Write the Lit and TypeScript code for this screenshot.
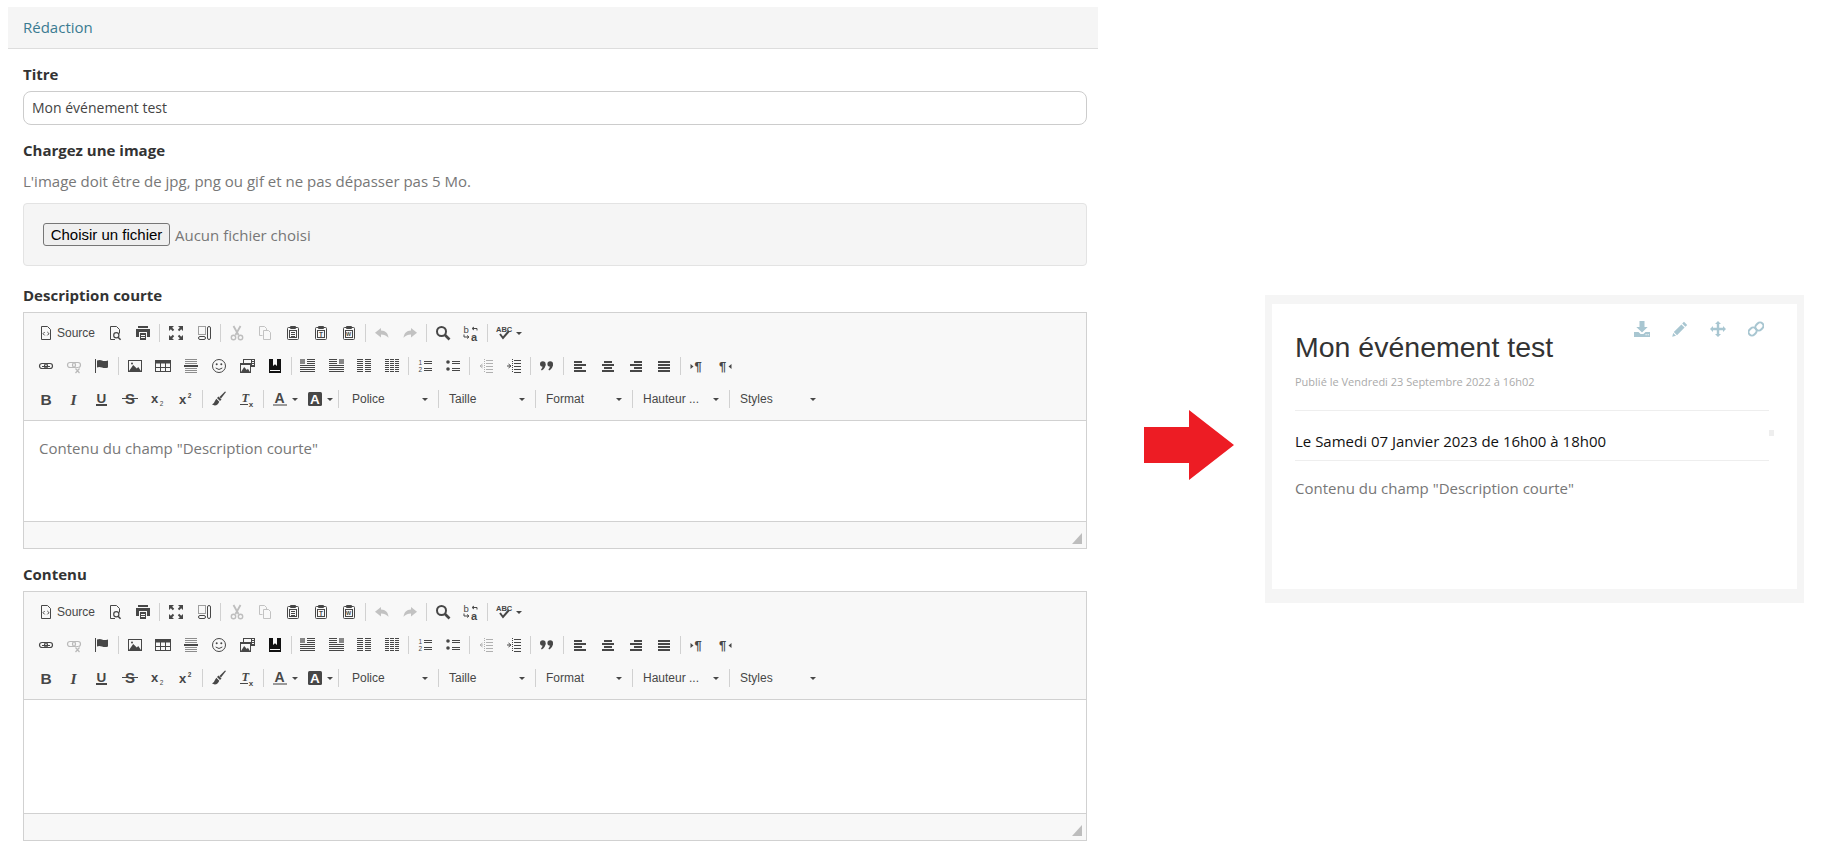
import { LitElement, html, css, svg } from "lit";
import { customElement } from "lit/decorators.js";

const DARK = "#474747";
const SANS = "Liberation Sans, Arial, sans-serif";

const hl = (x: number, w: number, ys: number[], h = 1, fill = DARK) =>
  ys.map((y) => svg`<rect x=${x} y=${y} width=${w} height=${h} fill=${fill}></rect>`);

const txt = (s: string, x: number, y: number, size: number, opts: { w?: string; st?: string; fam?: string; fill?: string } = {}) =>
  svg`<text x=${x} y=${y} font-size=${size} font-weight=${opts.w || "bold"} font-style=${opts.st || "normal"} font-family=${opts.fam || SANS} fill=${opts.fill || DARK}>${s}</text>`;

const clip = (inner: unknown) => svg`
  <path d="M5 2.5H3.5q-1 0-1 1v10q0 1 1 1h9q1 0 1-1v-10q0-1-1-1H11" fill="none" stroke=${DARK}></path>
  <rect x="5" y="1" width="6" height="3" rx="1" fill=${DARK}></rect>
  <rect x="4.5" y="5.5" width="7" height="7" fill="#f8f8f8" stroke=${DARK}></rect>
  ${inner}`;

const mountain = (x: number, y: number, w: number, h: number) =>
  svg`<path d="M${x} ${y + h}l${w * 0.35} ${-h}l${w * 0.3} ${h * 0.6}l${w * 0.12} ${-h * 0.25}l${w * 0.23} ${h * 0.65}z" fill=${DARK}></path>`;

const corner = svg`<path d="M1 1h5L4.2 2.8l2 2-1.4 1.4-2-2L1 6z" fill=${DARK}></path>`;

const ICONS: Record<string, unknown> = {
  source: svg`<path d="M3.5 1.5h6l3 3v10h-9z" fill="none" stroke=${DARK}></path><path d="M6.7 7L5 8.7l1.7 1.7M9.3 7L11 8.7l-1.7 1.7" fill="none" stroke=${DARK}></path>`,
  preview: svg`<path d="M8 14.5H3.5v-13h6l3 3v4" fill="none" stroke=${DARK}></path><circle cx="9.3" cy="10.3" r="2.6" fill="none" stroke=${DARK} stroke-width="1.2"></circle><path d="M11 12.2l2.6 2.6" stroke=${DARK} stroke-width="1.6"></path>`,
  print: svg`<rect x="3" y="1" width="10" height="2" fill=${DARK}></rect><rect x="1" y="4" width="14" height="8" fill=${DARK}></rect><rect x="4" y="7" width="8" height="8" fill="#f8f8f8"></rect><rect x="5" y="8" width="6" height="7" fill=${DARK}></rect>${hl(6, 4, [10, 12], 1, "#f8f8f8")}`,
  max: svg`${corner}<g transform="rotate(90 8 8)">${corner}</g><g transform="rotate(180 8 8)">${corner}</g><g transform="rotate(270 8 8)">${corner}</g>`,
  blocks: svg`<rect x="2.5" y="1.5" width="7" height="8" fill="none" stroke=${DARK} stroke-dasharray="1 1"></rect><rect x="2.5" y="11.5" width="7" height="3" rx="1.5" fill="none" stroke=${DARK}></rect><rect x="11.5" y="1.5" width="3" height="13" rx="1.5" fill="none" stroke=${DARK}></rect>`,
  cut: svg`<g opacity=".32"><path d="M4.5 1l5 9M11.5 1l-5 9" stroke=${DARK} stroke-width="1.8" fill="none"></path><circle cx="4.5" cy="12.5" r="2.2" fill="none" stroke=${DARK} stroke-width="1.4"></circle><circle cx="11.5" cy="12.5" r="2.2" fill="none" stroke=${DARK} stroke-width="1.4"></circle></g>`,
  copy: svg`<g opacity=".3" fill="none" stroke=${DARK}><path d="M5.5 10.5h-3v-9h5l2 2v2"></path><path d="M6.5 5.5h5l2 2v7h-7z"></path></g>`,
  paste: clip(hl(6, 4, [7, 9, 11])),
  pastetext: clip(txt("T", 6, 11.8, 6.5)),
  pasteword: clip(txt("W", 5, 11.2, 5.4)),
  undo: svg`<path d="M7 3L1 7.8l6 4.7V9.6c3 0 5 .8 7.5 3.2C14 8.5 11.5 5.8 7 5.6z" fill=${DARK} opacity=".3"></path>`,
  redo: svg`<path d="M9 3l6 4.8-6 4.7V9.6c-3 0-5 .8-7.5 3.2C2 8.5 4.5 5.8 9 5.6z" fill=${DARK} opacity=".3"></path>`,
  find: svg`<circle cx="6.5" cy="6.5" r="4.5" fill="none" stroke=${DARK} stroke-width="2"></circle><path d="M10 10l4.5 4.5" stroke=${DARK} stroke-width="2.6"></path>`,
  replace: svg`${txt("b", 0.5, 7.5, 9.5, { w: "normal" })}${txt("a", 8, 15.5, 11, { w: "bold" })}<path d="M14 5.5V3.5H9.5M11 2L9 3.5 11 5M1 9.5v2.5h4.5M4 10.5l2 1.5-2 1.5" fill="none" stroke=${DARK}></path>`,
  spell: svg`${txt("ABC", 0, 6.8, 7.5)}<path d="M4 9l3 4 6-7" fill="none" stroke=${DARK} stroke-width="2"></path>`,
  link: svg`<rect x="1.5" y="5.5" width="8" height="5" rx="2.5" fill="none" stroke=${DARK} stroke-width="1.2"></rect><rect x="6.5" y="5.5" width="8" height="5" rx="2.5" fill="none" stroke=${DARK} stroke-width="1.2"></rect>${hl(4, 8, [8], 1)}`,
  unlink: svg`<g opacity=".35"><rect x="1.5" y="4.5" width="8" height="5" rx="2.5" fill="none" stroke=${DARK} stroke-width="1.2"></rect><rect x="6.5" y="4.5" width="8" height="5" rx="2.5" fill="none" stroke=${DARK} stroke-width="1.2"></rect><path d="M9 10.5l4.5 4.5M13.5 10.5L9 15" stroke="#f8f8f8" stroke-width="3"></path><path d="M9.5 10.5l4 4.5M13.5 10.5l-4 4.5" stroke=${DARK} stroke-width="1.2"></path></g>`,
  anchor: svg`<rect x="1" y="1" width="1" height="14" fill=${DARK}></rect><path d="M3 2.5q3-1.2 5 0t6 0v7q-3 1.2-6 0t-5 0z" fill=${DARK}></path>`,
  image: svg`<rect x="1.5" y="2.5" width="13" height="11" fill="none" stroke=${DARK}></rect>${mountain(2, 7, 12, 6)}<circle cx="5" cy="5.5" r="1" fill=${DARK}></circle>`,
  table: svg`<rect x="0.5" y="2.5" width="15" height="11" fill="none" stroke=${DARK}></rect><rect x="0.5" y="2.5" width="15" height="3" fill=${DARK}></rect><path d="M5.5 5v8.5M10.5 5v8.5M1 9.5h14" stroke=${DARK}></path>`,
  hr: svg`${hl(2, 12, [1, 3, 5], 1, "#8d8d8d")}${hl(1, 14, [7], 2)}${hl(2, 12, [10, 12, 14], 1, "#8d8d8d")}`,
  smiley: svg`<circle cx="8" cy="8" r="6.5" fill="none" stroke=${DARK}></circle><circle cx="5.7" cy="6.3" r="1" fill=${DARK}></circle><circle cx="10.3" cy="6.3" r="1" fill=${DARK}></circle><path d="M4.7 10q3.3 3 6.6 0" fill="none" stroke=${DARK}></path>`,
  iframe: svg`<rect x="4.5" y="1.5" width="11" height="7" fill="#f8f8f8" stroke=${DARK}></rect><rect x="12" y="1" width="4" height="8" fill=${DARK}></rect>${hl(13, 2, [2, 4, 6], 1, "#f8f8f8")}<rect x="1.5" y="5.5" width="10" height="9" fill="#f8f8f8" stroke=${DARK}></rect><rect x="1" y="5" width="11" height="2" fill=${DARK}></rect>${mountain(2, 9, 9, 5)}`,
  book: svg`<path d="M2 1h12v14H2z" fill="#111"></path><path d="M6 1h4v7L8 6.3 6 8z" fill="#f8f8f8"></path><rect x="3" y="12" width="10" height="1" fill="#f8f8f8"></rect>`,
  colleft: svg`<rect x="0" y="1" width="5" height="5" fill="#888"></rect>${hl(7, 8, [1, 3, 5])}${hl(0, 15, [7, 9, 11, 13])}`,
  colright: svg`<rect x="11" y="1" width="5" height="5" fill="#888"></rect>${hl(1, 8, [1, 3, 5])}${hl(1, 15, [7, 9, 11, 13])}`,
  col2: svg`${hl(1, 6, [1, 3, 5, 7, 9, 11, 13])}${hl(9, 6, [1, 3, 5, 7, 9, 11, 13])}`,
  col3: svg`${hl(1, 4, [1, 3, 5, 7, 9, 11, 13])}${hl(6, 4, [1, 3, 5, 7, 9, 11, 13])}${hl(11, 4, [1, 3, 5, 7, 9, 11, 13])}`,
  numlist: svg`${txt("1", 1.5, 7, 6.5, { w: "normal" })}${txt("2", 1.5, 14, 6.5, { w: "normal" })}${hl(7, 8, [3, 5, 10, 12])}`,
  bullist: svg`<circle cx="3" cy="4" r="1.8" fill=${DARK}></circle><circle cx="3" cy="11" r="1.8" fill=${DARK}></circle>${hl(7, 8, [3, 5, 10, 12])}`,
  outdent: svg`<g opacity=".4"><path d="M6.5 1v14" stroke=${DARK} stroke-dasharray="1 1"></path><path d="M4.5 6L2 8l2.5 2M2 8h3" fill="none" stroke=${DARK}></path>${hl(8, 7, [2, 5, 8, 11, 14])}</g>`,
  indent: svg`<path d="M6.5 1v14" stroke=${DARK} stroke-dasharray="1 1"></path><path d="M2.5 6L5 8l-2.5 2M1 8h3.5" fill="none" stroke=${DARK}></path>${hl(8, 7, [2, 5, 8, 11, 14])}`,
  quote: svg`<circle cx="3.8" cy="6" r="2.8" fill=${DARK}></circle><path d="M6.6 6q0 4-3.8 6.5L2 11.5q1.5-1.5 1.5-3z" fill=${DARK}></path><circle cx="11.2" cy="6" r="2.8" fill=${DARK}></circle><path d="M14 6q0 4-3.8 6.5L9.4 11.5q1.5-1.5 1.5-3z" fill=${DARK}></path>`,
  aleft: svg`${hl(2, 8, [3, 9], 2)}${hl(2, 12, [6, 12], 2)}`,
  acenter: svg`${hl(4, 8, [3, 9], 2)}${hl(2, 12, [6, 12], 2)}`,
  aright: svg`${hl(6, 8, [3, 9], 2)}${hl(2, 12, [6, 12], 2)}`,
  ajust: svg`${hl(2, 12, [3, 6, 9, 12], 2)}`,
  ltr: svg`<path d="M1.5 6l3 2.5-3 2.5z" fill=${DARK}></path>${txt("¶", 5.5, 13, 13)}`,
  rtl: svg`<path d="M14.5 6l-3 2.5 3 2.5z" fill=${DARK}></path>${txt("¶", 2, 13, 13)}`,
  bold: txt("B", 2.5, 13.5, 15.5),
  italic: txt("I", 4.5, 13.5, 15.5, { st: "italic", fam: "Liberation Serif, serif" }),
  underline: svg`${txt("U", 2.5, 11.5, 13.5)}<rect x="2" y="13" width="11" height="2" fill=${DARK}></rect>`,
  strike: svg`${txt("S", 3, 13, 15)}<rect x="0" y="7" width="16" height="1" fill=${DARK}></rect>`,
  sub: svg`${txt("x", 1, 11.5, 13)}${txt("2", 9.8, 14.5, 6.5, { w: "normal" })}`,
  sup: svg`${txt("x", 1, 13, 13)}${txt("2", 9.8, 7, 6.5)}`,
  brush: svg`<path d="M15 1l-1-.5L8.5 6 10 7.5z" fill=${DARK}></path><path d="M7.5 5.5l3 3-1.5 1.5-3-3z" fill=${DARK}></path><path d="M5.3 7.7l3 3q-1.5 3.5-4.5 3.8l-2.8-1q2.5-1.5 2.8-3.2z" fill=${DARK}></path>`,
  clear: svg`${txt("T", 2.5, 11, 12.5, { st: "italic", fam: "Liberation Serif, serif" })}<rect x="1" y="13" width="8" height="1" fill=${DARK}></rect>${txt("x", 9.8, 15.5, 8)}`,
  color: svg`${txt("A", 2.5, 12, 14)}<rect x="1" y="13" width="14" height="2" fill="#9a9a9a"></rect>`,
  bgcolor: svg`<rect x="1" y="1" width="14" height="14" rx="1.5" fill=${DARK}></rect>${txt("A", 3, 12.8, 13.5, { fill: "#fff" })}`,
};

const CARD_ICONS = {
  download: svg`<path d="M5.5 0h5v6h3.2L8 11.5 2.3 6h3.2z"></path><path d="M0 11h4.5L6.6 13h2.8L11.5 11H16v5H0zM11.5 13.2v1h1.2v-1zM13.6 13.2v1h1.2v-1z" fill-rule="evenodd"></path>`,
  pencil: svg`<path d="M12 .8l3.2 3.2-1.8 1.8-3.2-3.2zM9.4 3.4l3.2 3.2-7.6 7.6-3.2-3.2zM1.2 12l2.8 2.8-3.8 1z"></path>`,
  move: svg`<path d="M8 0l3 3H9.2v3.8H13V5l3 3-3 3V9.2H9.2V13H11l-3 3-3-3h1.8V9.2H3V11L0 8l3-3v1.8h3.8V3H5z"></path>`,
  link: svg`<g fill="none" stroke="currentColor" stroke-width="2"><rect x="8" y="1.2" width="6.8" height="8.6" rx="3.4" transform="rotate(45 11.4 5.5)"></rect><rect x="1.2" y="6.2" width="6.8" height="8.6" rx="3.4" transform="rotate(45 4.6 10.5)"></rect></g>`,
};

const icon = (name: string) => html`<svg class="ico" viewBox="0 0 16 16" aria-hidden="true">${ICONS[name]}</svg>`;
const arrowDown = html`<span class="caret"></span>`;

type Item = string;
const ROW1: Item[] = ["source", "preview", "print", "|", "max", "blocks", "|", "cut", "copy", "paste", "pastetext", "pasteword", "|", "undo", "redo", "|", "find", "replace", "|", "spell>"];
const ROW2: Item[] = ["link", "unlink", "anchor", "|", "image", "table", "hr", "smiley", "iframe", "book", "|", "colleft", "colright", "col2", "col3", "|", "numlist", "bullist", "|", "outdent", "indent", "|", "quote", "|", "aleft", "acenter", "aright", "ajust", "|", "ltr", "rtl"];
const ROW3: Item[] = ["bold", "italic", "underline", "strike", "sub", "sup", "|", "brush", "clear", "|", "color>", "bgcolor>", "|", "#Police", "|", "#Taille", "|", "#Format", "|", "#Hauteur ...", "|", "#Styles"];

@customElement("cke-box")
class CkeBox extends LitElement {
  static properties = { tall: { type: Boolean }, text: { type: String } };
  tall = false;
  text = "";

  static styles = css`
    :host { display: block; }
    .editor { border: 1px solid #d1d1d1; background: #fff; }
    .toolbar {
      background: #f8f8f8; border-bottom: 1px solid #d1d1d1;
      padding: 3px 0 4px 8px; display: flex; flex-direction: column;
    }
    .row { display: flex; align-items: center; height: 34px; }
    .row:nth-child(2) { height: 32px; }
    .btn { width: 28px; height: 24px; display: flex; align-items: center; justify-content: center; flex: none; }
    .btn.more { width: 35px; justify-content: flex-start; padding-left: 6px; box-sizing: border-box; }
    .btn.more .caret { margin-left: 4px; }
    .btn.src { width: 69px; justify-content: flex-start; padding-left: 6px; box-sizing: border-box; gap: 3px; }
    .ico { width: 16px; height: 16px; display: block; flex: none; overflow: visible; }
    .srclabel, .combo { font: 12px "Liberation Sans", Arial, sans-serif; color: #474747; }
    .sep { width: 1px; height: 18px; background: #d1d1d1; margin: 0 2px; flex: none; }
    .combo {
      width: 96px; height: 24px; box-sizing: border-box; padding: 0 10px; margin: 0 -2px;
      display: flex; align-items: center; justify-content: space-between; flex: none;
    }
    .combo.first { width: 99px; padding-left: 13px; }
    .caret { width: 0; height: 0; border: 3px solid transparent; border-top-color: #474747; border-bottom: 0; flex: none; }
    .area {
      height: 100px; padding: 17px 15px 0; box-sizing: border-box;
      font: 15px/20px "Open Sans", sans-serif; color: #777;
    }
    .tall .area { height: 113px; }
    .foot {
      height: 27px; box-sizing: border-box; background: #f8f8f8; border-top: 1px solid #d1d1d1;
      display: flex; justify-content: flex-end; align-items: flex-end; padding: 0 4px 4px 0;
    }
    .grip { width: 10px; height: 11px; display: block; }
  `;

  private item(it: Item, first: boolean) {
    if (it === "|") return html`<span class="sep"></span>`;
    if (it === "source")
      return html`<span class="btn src">${icon("source")}<span class="srclabel">Source</span></span>`;
    if (it.startsWith("#"))
      return html`<span class="combo ${first ? "first" : ""}"><span>${it.slice(1)}</span>${arrowDown}</span>`;
    if (it.endsWith(">")) return html`<span class="btn more">${icon(it.slice(0, -1))}${arrowDown}</span>`;
    return html`<span class="btn">${icon(it)}</span>`;
  }

  private row(items: Item[]) {
    const firstCombo = items.findIndex((i) => i.startsWith("#"));
    return html`<div class="row">${items.map((it, i) => this.item(it, i === firstCombo))}</div>`;
  }

  render() {
    return html`<div class="editor ${this.tall ? "tall" : ""}">
      <div class="toolbar">${this.row(ROW1)}${this.row(ROW2)}${this.row(ROW3)}</div>
      <div class="area">${this.text}</div>
      <div class="foot">
        <svg class="grip" viewBox="0 0 10 11"><path d="M10 0v11H0z" fill="#bdbdbd"></path></svg>
      </div>
    </div>`;
  }
}

@customElement("app-root")
export class AppRoot extends LitElement {
  static styles = css`
    :host { display: flex; align-items: flex-start; font: 15px/20px "Open Sans", sans-serif; color: #333; background: #fff; min-height: 848px; padding: 7px 0 0 8px; box-sizing: border-box; }
    .panel { width: 1090px; flex: none; }
    .head {
      height: 41px; box-sizing: content-box; background: #f5f5f5; border-bottom: 1px solid #ddd; padding-left: 15px;
      display: flex; align-items: flex-start; color: #3a7b91; line-height: 40px;
    }
    .form { padding: 15px 11px 0 15px; }
    .lbl { display: block; font-weight: 700; color: #333; line-height: 20px; }
    .titleinput {
      margin-top: 7px; height: 34px; box-sizing: border-box; border: 1px solid #ccc; border-radius: 8px;
      padding: 0 8px; display: flex; align-items: center; color: #444; font-size: 14px;
    }
    .charge { margin-top: 15px; }
    .note { margin-top: 11px; color: #777; }
    .filebox {
      margin-top: 12px; height: 63px; box-sizing: border-box; background: #f5f5f5; border: 1px solid #e3e3e3; border-radius: 4px;
      padding: 0 19px; display: flex; align-items: center; gap: 5px; color: #777;
    }
    .filebtn {
      height: 23px; width: 127px; box-sizing: border-box; padding: 0; border: 1px solid #767676; border-radius: 3px; background: #efefef;
      font: 15px "Liberation Sans", Arial, sans-serif; color: #000; text-align: center;
    }
    .desc { margin-top: 19px; margin-bottom: 7px; }
    .cont { margin-top: 15px; margin-bottom: 7px; }
    .arrow { width: 90px; height: 70px; margin: 403px 31px 0 46px; flex: none; display: block; }
    .card { width: 539px; height: 308px; flex: none; margin-top: 288px; background: #f5f5f5; padding: 9px 7px 14px; box-sizing: border-box; }
    .inner { background: #fff; height: 100%; padding: 17px 28px 0 23px; box-sizing: border-box; }
    .top { display: grid; grid-template-columns: 1fr auto; }
    h1 { margin: 9px 0 0; font: 400 28.5px/34px "Liberation Sans", Arial, sans-serif; color: #333; }
    .tools { display: flex; gap: 22px; padding-right: 5px; color: #a8c6d1; }
    .tools svg { width: 16px; height: 16px; display: block; fill: currentColor; }
    .meta { margin-top: 10px; font-size: 11px; line-height: 16px; color: #aaa; }
    .rule { height: 1px; background: #eee; }
    .r1 { margin-top: 20px; }
    .date { margin-top: 20px; display: flex; justify-content: space-between; margin-right: -5px; color: #111; }
    .square { width: 5px; height: 6px; background: #eee; margin-top: -1px; }
    .r2 { margin-top: 9px; }
    .text { margin-top: 17px; color: #777; }
  `;

  render() {
    return html`
      <section class="panel">
        <div class="head">Rédaction</div>
        <div class="form">
          <div class="lbl">Titre</div>
          <div class="titleinput">Mon événement test</div>
          <div class="lbl charge">Chargez une image</div>
          <div class="note">L'image doit être de jpg, png ou gif et ne pas dépasser pas 5 Mo.</div>
          <div class="filebox"><button class="filebtn">Choisir un fichier</button><span>Aucun fichier choisi</span></div>
          <div class="lbl desc">Description courte</div>
          <cke-box text='Contenu du champ "Description courte"'></cke-box>
          <div class="lbl cont">Contenu</div>
          <cke-box tall></cke-box>
        </div>
      </section>
      <svg class="arrow" viewBox="0 0 90 70" aria-hidden="true"><path d="M0 17h45V0l45 35-45 35V53H0z" fill="#ed1c24"></path></svg>
      <section class="card">
        <div class="inner">
          <div class="top">
            <h1>Mon événement test</h1>
            <div class="tools">
              <svg viewBox="0 0 16 16">${CARD_ICONS.download}</svg>
              <svg viewBox="0 0 16 16">${CARD_ICONS.pencil}</svg>
              <svg viewBox="0 0 16 16">${CARD_ICONS.move}</svg>
              <svg viewBox="0 0 16 16">${CARD_ICONS.link}</svg>
            </div>
          </div>
          <div class="meta">Publié le Vendredi 23 Septembre 2022 à 16h02</div>
          <div class="rule r1"></div>
          <div class="date"><span>Le Samedi 07 Janvier 2023 de 16h00 à 18h00</span><span class="square"></span></div>
          <div class="rule r2"></div>
          <div class="text">Contenu du champ "Description courte"</div>
        </div>
      </section>
    `;
  }
}
